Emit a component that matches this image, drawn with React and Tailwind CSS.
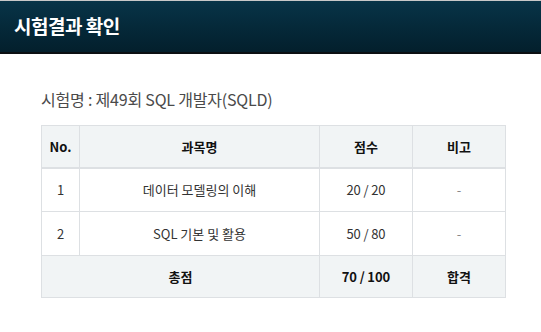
export default function App() {
  const font = { fontFamily: '"Noto Sans CJK KR", "Noto Sans", sans-serif' };
  return (
    <div className="w-[541px] h-[332px] bg-white overflow-hidden" style={font}>
      <div className="h-[54px] border-t border-[#c8c8c8] border-b-2 border-b-[#0b0f12] bg-gradient-to-b from-[#083448] to-[#031f2c] flex items-center pl-[14px]">
        <h1 className="text-white text-[19px] font-bold tracking-[-0.5px]">시험결과 확인</h1>
      </div>
      <div className="pl-[41px] pt-[33px]">
        <p className="text-[16px] text-[#4a4a4a] tracking-[-0.2px] leading-[24px]">시험명 : 제49회 SQL 개발자(SQLD)</p>
        <table className="mt-[14px] w-[465px] border-collapse text-[13px] text-[#333] text-center">
          <thead>
            <tr className="h-[42px] bg-[#f1f4f5] border-b-2 border-[#dde0e3]">
              <th className="w-[38px] border border-[#dde0e3] font-bold text-[#111]">No.</th>
              <th className="w-[240px] border border-[#dde0e3] font-bold text-[#111]">과목명</th>
              <th className="w-[93px] border border-[#dde0e3] font-bold text-[#111]">점수</th>
              <th className="border border-[#dde0e3] font-bold text-[#111]">비고</th>
            </tr>
          </thead>
          <tbody>
            <tr className="h-[44px]">
              <td className="border border-[#dde0e3]">1</td>
              <td className="border border-[#dde0e3]">데이터 모델링의 이해</td>
              <td className="border border-[#dde0e3]">20{"\u2009/\u2009"}20</td>
              <td className="border border-[#dde0e3] text-[#888]">-</td>
            </tr>
            <tr className="h-[44px]">
              <td className="border border-[#dde0e3]">2</td>
              <td className="border border-[#dde0e3]">SQL 기본 및 활용</td>
              <td className="border border-[#dde0e3]">50{"\u2009/\u2009"}80</td>
              <td className="border border-[#dde0e3] text-[#888]">-</td>
            </tr>
            <tr className="h-[42px] bg-[#f1f4f5] font-bold text-[#111]">
              <td colSpan={2} className="border border-[#dde0e3]">총점</td>
              <td className="border border-[#dde0e3]">70{"\u2009/\u2009"}100</td>
              <td className="border border-[#dde0e3]">합격</td>
            </tr>
          </tbody>
        </table>
      </div>
    </div>
  );
}
